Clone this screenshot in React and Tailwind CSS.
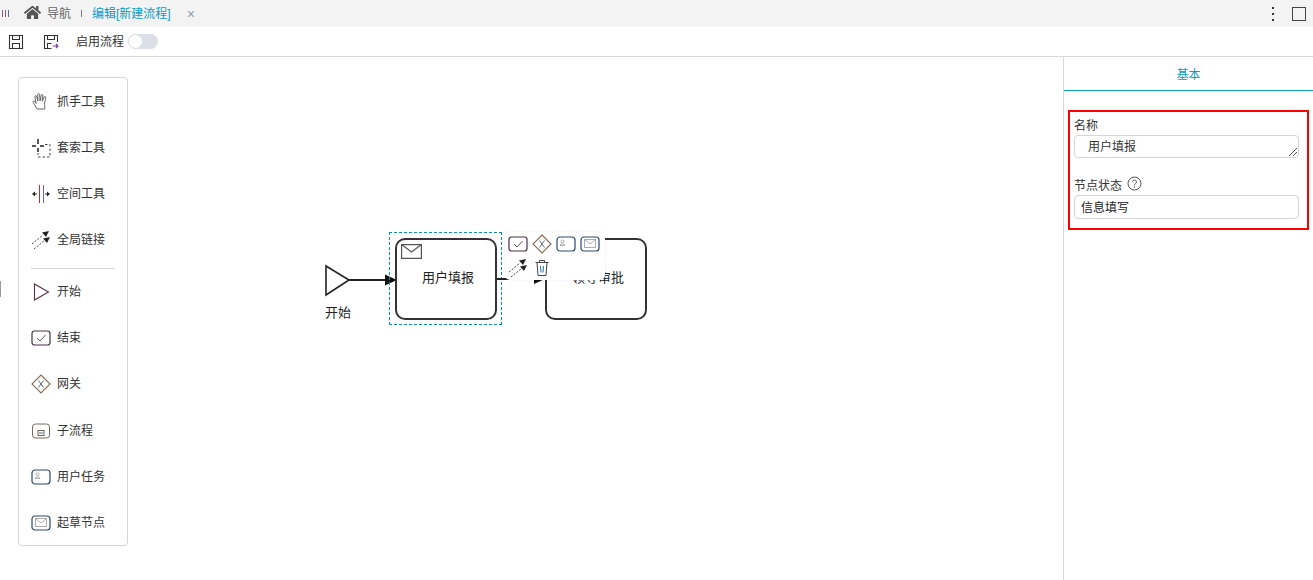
import { FaHome } from "react-icons/fa";

const font = { fontFamily: '"Liberation Sans", "Noto Sans CJK SC", sans-serif' };

const HandIcon = () => (
  <svg width="20" height="20" viewBox="0 0 20 20" fill="none" stroke="#555" strokeWidth="0.9">
    <path d="M6 17 L2.2 10.5 C1.6 9.4 3 8.6 3.8 9.6 L5.2 11.4 L3.8 4.8 C3.6 3.5 5.3 3.2 5.6 4.5 L6.9 9 L6.7 2.6 C6.7 1.2 8.5 1.2 8.6 2.6 L9.1 8.8 L10.2 3.2 C10.5 1.9 12.1 2.2 11.9 3.6 L11.2 9.2 L13.2 5 C13.8 3.9 15.2 4.5 14.8 5.7 L13.6 11 C13.3 13 14 14.5 13.8 17 Z" />
  </svg>
);
const LassoIcon = () => (
  <svg width="20" height="20" viewBox="0 0 20 20" fill="none">
    <path d="M7 1v5M7 10v4M1 8h4M9 8h4" stroke="#222" strokeWidth="1.5" />
    <path d="M14 6.5h5v12.5h-12v-4" stroke="#444" strokeDasharray="2.5 2" />
  </svg>
);
const SpaceIcon = () => (
  <svg width="20" height="20" viewBox="0 0 20 20" fill="none">
    <path d="M8.5 1v18" stroke="#a33" />
    <path d="M12.5 1v18" stroke="#66c" />
    <path d="M1 10l3-2.5v5zM19 10l-3-2.5v5z" fill="#222" />
    <path d="M4 10h2M14 10h2" stroke="#222" />
  </svg>
);
const ConnectIcon = ({ size = 20 }) => (
  <svg width={size} height={size} viewBox="0 0 20 20" fill="none">
    <path d="M1 14 L12 5" stroke="#444" strokeDasharray="2 1.5" />
    <path d="M11 2.5 L18 1 L15 7 Z" fill="#222" />
    <path d="M3 19 L13 11" stroke="#444" strokeDasharray="2 1.5" />
    <path d="M12 8.5 L19 7 L16 13 Z" fill="#222" />
  </svg>
);
const StartIcon = () => (
  <svg width="20" height="20" viewBox="0 0 20 20" fill="none">
    <path d="M3.5 2 L17.5 10 L3.5 18 Z" stroke="#534" strokeWidth="1.1" />
  </svg>
);
const EndIcon = ({ size = 20 }) => (
  <svg width={size} height={size} viewBox="0 0 20 20" fill="none">
    <rect x="1" y="3" width="18" height="14" rx="2.5" stroke="#434" strokeWidth="1.2" />
    <path d="M6 10 L9 13 L14.5 7" stroke="#555" />
  </svg>
);
const GatewayIcon = ({ size = 20 }) => (
  <svg width={size} height={size} viewBox="0 0 20 20" fill="none">
    <path d="M10 1 L19 10 L10 19 L1 10 Z" stroke="#8a6a50" strokeWidth="1.1" />
    <path d="M7.5 6.5 L12.5 13.5 M12.5 6.5 L7.5 13.5" stroke="#666" />
  </svg>
);
const SubIcon = () => (
  <svg width="20" height="20" viewBox="0 0 20 20" fill="none">
    <rect x="1.5" y="3" width="17" height="14" rx="3" stroke="#7b6a5b" />
    <rect x="7" y="9.5" width="6" height="5" stroke="#666" />
    <path d="M8 12h4" stroke="#666" />
  </svg>
);
const UserIcon = ({ size = 20 }) => (
  <svg width={size} height={size} viewBox="0 0 20 20" fill="none">
    <rect x="1" y="3" width="18" height="14" rx="3" stroke="#2a4a6a" strokeWidth="1.2" />
    <circle cx="6.5" cy="7.5" r="1.5" stroke="#999" strokeWidth="0.8" />
    <path d="M4 11.5 C4 9.5 9 9.5 9 11.5 Z" stroke="#999" strokeWidth="0.8" />
  </svg>
);
const MailTaskIcon = ({ size = 20 }) => (
  <svg width={size} height={size} viewBox="0 0 20 20" fill="none">
    <rect x="1" y="3" width="18" height="14" rx="3" stroke="#2a4a6a" strokeWidth="1.2" />
    <rect x="4.5" y="5.5" width="11" height="8" stroke="#999" strokeWidth="0.8" />
    <path d="M4.5 5.5 L10 10 L15.5 5.5" stroke="#999" strokeWidth="0.8" />
  </svg>
);
const TrashIcon = () => (
  <svg width="16" height="18" viewBox="0 0 16 18" fill="none" stroke="#444">
    <path d="M1.5 3.5h13M5.5 3.5V1.5h5v2M3 3.5 L4 16.5h8 L13 3.5" />
    <path d="M6.5 7 L7 13.5M9.5 7 L9 13.5" stroke="#2a6fb0" />
  </svg>
);
const SaveIcon = () => (
  <svg width="16" height="16" viewBox="0 0 16 16" fill="none" stroke="#333" strokeWidth="1.1">
    <path d="M1.5 1.5h13v13h-13z" />
    <path d="M4.5 1.5v4h7v-4M4.5 14.5v-5h7v5" />
  </svg>
);
const SaveAsIcon = () => (
  <svg width="16" height="16" viewBox="0 0 16 16" fill="none" stroke="#333" strokeWidth="1.1">
    <path d="M14.5 8V1.5h-13v13h7" />
    <path d="M4.5 1.5v4h7v-4M4.5 14.5v-5h4" />
    <path d="M10 12h5M13 10l2 2-2 2" stroke="#7a3a9a" />
  </svg>
);

const tools = [
  { label: "抓手工具", icon: <HandIcon /> },
  { label: "套索工具", icon: <LassoIcon /> },
  { label: "空间工具", icon: <SpaceIcon /> },
  { label: "全局链接", icon: <ConnectIcon /> },
];
const shapes = [
  { label: "开始", icon: <StartIcon /> },
  { label: "结束", icon: <EndIcon /> },
  { label: "网关", icon: <GatewayIcon />, size: "h-[46px] mb-[1px]" },
  { label: "子流程", icon: <SubIcon /> },
  { label: "用户任务", icon: <UserIcon /> },
  { label: "起草节点", icon: <MailTaskIcon />, size: "h-[45px] pt-[1px]" },
];

const PaletteItem = ({ item }) => (
  <div className={`flex items-center gap-[6px] pl-[12px] text-[12px] text-[#333] ${item.size || "h-[46px]"}`}>
    <span className="flex w-[20px] justify-center">{item.icon}</span>
    <span>{item.label}</span>
  </div>
);

export default function App() {
  return (
    <div className="flex h-[580px] w-[1313px] flex-col overflow-hidden bg-white" style={font}>
      {/* Tabs */}
      <div className="flex h-[27px] items-center bg-[#f3f3f3] text-[12px]">
        <div className="ml-[2px] flex gap-[2px]">
          <span className="h-[7px] w-[1px] bg-[#a0527a]" />
          <span className="h-[7px] w-[1px] bg-[#666]" />
          <span className="h-[7px] w-[1px] bg-[#5a6aa0]" />
        </div>
        <FaHome size={17} className="mb-[3px] ml-[15px] text-[#555]" />
        <span className="ml-[6px] text-[#666]">导航</span>
        <span className="ml-[10px] h-[7px] w-[1px] bg-[#777]" />
        <span className="ml-[10px] text-[#0a9bc4]">编辑[新建流程]</span>
        <span className="ml-[16px] text-[14px] leading-none text-[#8aa0b0]">×</span>
        <div className="ml-auto flex items-center">
          <div className="flex flex-col gap-[4px]">
            <span className="h-[2px] w-[2px] bg-[#333]" />
            <span className="h-[2px] w-[2px] bg-[#333]" />
            <span className="h-[2px] w-[2px] bg-[#333]" />
          </div>
          <span className="ml-[18px] mr-[7px] h-[14px] w-[14px] border border-[#444]" />
        </div>
      </div>

      {/* Toolbar */}
      <div className="flex h-[30px] items-center border-b border-[#d8d8d8] pl-[8px] text-[12px] text-[#333]">
        <SaveIcon />
        <span className="ml-[19px]"><SaveAsIcon /></span>
        <span className="ml-[17px]">启用流程</span>
        <span className="ml-[4px] flex h-[15px] w-[30px] items-center rounded-full bg-[#dcdfe6] pl-[1px]">
          <span className="h-[13px] w-[13px] rounded-full bg-white" />
        </span>
      </div>

      <div className="flex min-h-0 flex-1">
        {/* Canvas */}
        <div className="relative flex-1 pl-[18px] pt-[20px]">
          <span className="absolute left-0 top-[224px] h-[16px] w-[1px] bg-[#999]" />

          <div className="relative z-10 w-[110px] rounded-[4px] border border-[#d5d5d5] bg-white pt-[1px]">
            {tools.map((item) => <PaletteItem key={item.label} item={item} />)}
            <div className="mx-[12px] mt-[5px] border-t border-[#d5d5d5]" />
            {shapes.map((item) => <PaletteItem key={item.label} item={item} />)}
          </div>

          {/* Diagram */}
          <svg className="absolute left-[320px] top-[200px]" width="90" height="50" fill="none">
            <path d="M6 9 L29 23 L6 38 Z" stroke="#222" strokeWidth="1.6" fill="#fff" />
            <path d="M29 23 H68" stroke="#222" strokeWidth="2" />
            <path d="M65 17.5 L77 23 L65 28.5 Z" fill="#111" />
          </svg>
          <span className="absolute left-[325px] top-[246px] text-[13px] text-[#222]">开始</span>

          <div className="absolute left-[389px] top-[175px] h-[93px] w-[113px] border border-dashed border-[#0a8fb0]" />
          <div className="absolute left-[395px] top-[181px] flex h-[82px] w-[102px] items-center justify-center rounded-[10px] border-2 border-[#333] bg-white pb-[2px] pl-[4px] text-[13px] text-[#222]">
            用户填报
            <svg className="absolute left-[4px] top-[4px]" width="21" height="15" fill="none" stroke="#555" strokeWidth="1.2">
              <path d="M.6.6h19.8v13.8H.6z" />
              <path d="M.6.6 L10.5 8 L20.4.6" />
            </svg>
          </div>

          <svg className="absolute left-[495px] top-[210px]" width="52" height="30" fill="none">
            <path d="M2 12 H40" stroke="#222" strokeWidth="2" />
            <path d="M39 7 L50 12 L39 17 Z" fill="#111" />
          </svg>
          <div className="absolute left-[545px] top-[181px] flex h-[82px] w-[102px] items-center justify-center rounded-[10px] border-2 border-[#333] bg-white pb-[2px] pl-[4px] text-[13px] text-[#222]">
            领导审批
          </div>

          {/* Context pad */}
          <div className="absolute left-[505px] top-[175px] z-10 w-[100px] rounded-[5px] bg-white pl-[3px] shadow-[0_0_3px_rgba(0,0,0,0.08)]">
            <div className="flex h-[24px] items-center gap-[4px]">
              <EndIcon />
              <GatewayIcon />
              <UserIcon />
              <MailTaskIcon />
            </div>
            <div className="flex h-[24px] items-center gap-[6px] pb-[1px]">
              <ConnectIcon />
              <TrashIcon />
            </div>
          </div>
        </div>

        {/* Properties */}
        <div className="w-[250px] border-l border-[#d8d8d8] text-[12px] text-[#333]">
          <div className="flex h-[34px] items-center justify-center border-b border-[#0a9bc4] pt-[2px] text-[#0a9bc4]">基本</div>
          <div className="mx-[4px] mt-[19px] h-[120px] border-2 border-[#f00] pl-[4px] pr-[6px] pt-[5px]">
            <div className="leading-[18px]">名称</div>
            <div className="relative mr-[2px] h-[23px] rounded-[4px] border border-[#d5d5d5] pl-[13px] leading-[23px]">
              用户填报
              <svg className="absolute bottom-0 right-0" width="10" height="10" stroke="#555">
                <path d="M1 9 L9 1M5 9 L9 5" />
              </svg>
            </div>
            <div className="mt-[18px] flex h-[19px] items-center">
              节点状态
              <svg className="mb-[5px] ml-[5px]" width="15" height="15" viewBox="0 0 15 15" fill="none" stroke="#555">
                <circle cx="7.5" cy="7.5" r="6.5" />
                <path d="M5.5 6 C5.5 3.5 9.5 3.5 9.5 6 C9.5 7.5 7.5 7.5 7.5 9.3" />
                <path d="M7.5 10.5v1.2" />
              </svg>
            </div>
            <div className="mr-[2px] h-[24px] rounded-[4px] border border-[#d5d5d5] pl-[6px] leading-[25px] text-[#222]">信息填写</div>
          </div>
        </div>
      </div>
    </div>
  );
}
